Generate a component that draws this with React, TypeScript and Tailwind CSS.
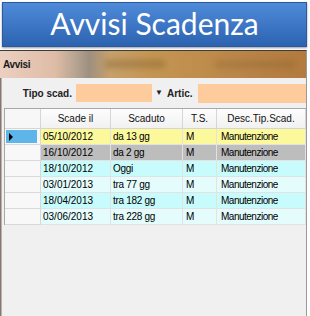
const rows = [
  { date: '05/10/2012', due: 'da 13 gg', bg: 'bg-[#fcf99c]' },
  { date: '16/10/2012', due: 'da 2 gg', bg: 'bg-[#bdbdbd]' },
  { date: '18/10/2012', due: 'Oggi', bg: 'bg-[#c8fbfb]' },
  { date: '03/01/2013', due: 'tra 77 gg', bg: 'bg-[#e4fcfc]' },
  { date: '18/04/2013', due: 'tra 182 gg', bg: 'bg-[#c8fbfb]' },
  { date: '03/06/2013', due: 'tra 228 gg', bg: 'bg-[#e4fcfc]' },
];

const cols = ['Scade il', 'Scaduto', 'T.S.', 'Desc.Tip.Scad.'];

export default function App() {
  return (
    <div className="w-[310px] h-[316px] bg-white flex flex-col overflow-hidden font-['Liberation_Sans',sans-serif] text-black">
      {/* banner */}
      <div className="pt-[2px] pl-[2px]">
        <div className="h-[45px] w-[305px] flex items-center justify-center bg-gradient-to-b from-[#4f8bd9] to-[#2c63b1] border border-[#2a5aa0] shadow-[0_1px_2px_rgba(0,0,0,0.4)]">
          <span className="font-['Lato',sans-serif] text-[30px] leading-none text-white pb-[3px]">Avvisi Scadenza</span>
        </div>
      </div>
      <div className="h-[3px]" />

      {/* window */}
      <div className="flex-1 flex flex-col w-[307px] border-t border-[#3c3c3c] border-r border-r-[#9a9a9a]">
        <div className="h-[27px] relative flex items-center pl-[3px] bg-[linear-gradient(90deg,#ebd0c1_0%,#dfbca6_18%,#b4a390_25%,#9e8f80_29%,#c7a06a_36%,#c49552_50%,#bf8d4c_65%,#b98448_80%,#b27a3e_100%)]">
          <span className="absolute left-[105px] top-[9px] w-[60px] h-[8px] bg-[#7a5a2a] opacity-40 blur-[3px]" />
          <span className="absolute left-[215px] top-[10px] w-[80px] h-[7px] bg-[#7a5a2a] opacity-30 blur-[3px]" />
          <span className="relative text-[10px] text-[#1a1a1a] font-bold tracking-[-0.3px]">Avvisi</span>
        </div>

        <div className="flex-1 flex">
          <div className="w-[3px] bg-gradient-to-r from-[#6e5c52] via-[#a0918a] to-[#d8d2ce]" />
          <div className="flex-1 flex flex-col bg-[#f0f0f0]">
            {/* toolbar */}
            <div className="h-[30px] flex items-center text-[10px] font-bold text-[#222]">
              <span className="w-[70px] text-right">Tipo scad.</span>
              <div className="ml-[4px] w-[76px] h-[18px] bg-[#fecc9c]" />
              <span className="w-[14px] text-center text-[8px] leading-none text-[#222]">▼</span>
              <span className="ml-[1px]">Artic.</span>
              <div className="ml-[5px] flex-1 h-[19px] bg-[#fecc9c]" />
            </div>

            {/* grid */}
            <div className="ml-[2px] border-l border-t border-[#a8a8a8] grid grid-cols-[36px_70px_72px_34px_89px] text-[10px] leading-none">
              <div className="h-[20px] bg-[#f7f7f7] border-r border-b border-[#d5d5d5]" />
              {cols.map((c) => (
                <div key={c} className="h-[20px] flex items-center justify-center bg-gradient-to-b from-[#fdfdfd] to-[#f1f1f1] border-r border-b border-[#d5d5d5] text-[#111]">
                  {c}
                </div>
              ))}
              {rows.map((r, i) => (
                <div key={r.date} className="contents">
                  <div className="h-[16px] bg-[#f8f8f8] border-r border-b border-[#d8d8d8] flex items-center">
                    {i === 0 && (
                      <div className="ml-[1px] w-[31px] h-[13px] bg-[#5db5ea] flex items-center pl-[3px]">
                        <span className="w-0 h-0 border-y-[4px] border-y-transparent border-l-[4px] border-l-black" />
                      </div>
                    )}
                  </div>
                  <div className={`h-[16px] ${r.bg} border-r border-b border-[#e2e2e2] flex items-center pl-[2px]`}>{r.date}</div>
                  <div className={`h-[16px] ${r.bg} border-r border-b border-[#e2e2e2] flex items-center pl-[2px] tracking-[-0.3px]`}>{r.due}</div>
                  <div className={`h-[16px] ${r.bg} border-r border-b border-[#e2e2e2] flex items-center pl-[3px]`}>M</div>
                  <div className={`h-[16px] ${r.bg} border-r border-b border-[#e2e2e2] flex items-center pl-[4px] tracking-[-0.5px]`}>Manutenzione</div>
                </div>
              ))}
            </div>
          </div>
        </div>
      </div>
    </div>
  );
}
